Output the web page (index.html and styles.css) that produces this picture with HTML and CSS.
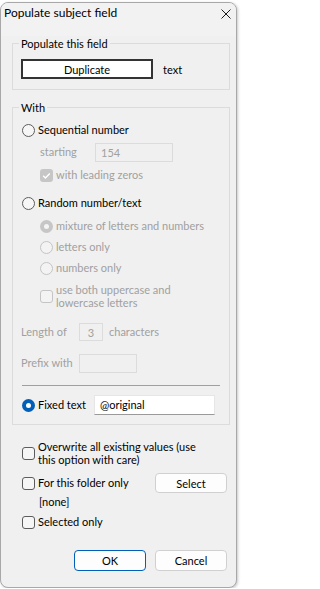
FILE: index.html
```html
<!DOCTYPE html>
<html>
<head>
<meta charset="utf-8">
<link rel="stylesheet" href="styles.css">
</head>
<body>
<div class="window">
  <div class="titlebar">
    <span class="title">Populate subject field</span>
    <svg class="close" width="10" height="10" viewBox="0 0 10 10"><path d="M0.5 0.5 L9.5 9.5 M9.5 0.5 L0.5 9.5" stroke="#1b1b1b" stroke-width="1" fill="none"/></svg>
  </div>
  <div class="content">
    <fieldset class="group g1">
      <legend>Populate this field</legend>
      <div class="dup-row">
        <button class="btn-dup">Duplicate</button>
        <span class="suffix">text</span>
      </div>
    </fieldset>

    <fieldset class="group g2">
      <legend>With</legend>
      <div class="row r-seq"><span class="radio"></span><span class="lbl">Sequential number</span></div>
      <div class="row r-start indent"><span class="lbl dis w-start">starting</span><span class="edit dis e-start">154</span></div>
      <div class="row r-zeros indent"><span class="check checked-dis"><svg width="13" height="13" viewBox="0 0 13 13"><path d="M3.2 6.8 L5.4 9 L9.8 4.4" stroke="#fff" stroke-width="1.4" fill="none"/></svg></span><span class="lbl dis">with leading zeros</span></div>
      <div class="row r-rand"><span class="radio"></span><span class="lbl">Random number/text</span></div>
      <div class="row r-mix indent"><span class="radio checked-dis"></span><span class="lbl dis">mixture of letters and numbers</span></div>
      <div class="row r-tight indent"><span class="radio dis"></span><span class="lbl dis">letters only</span></div>
      <div class="row r-tight indent"><span class="radio dis"></span><span class="lbl dis">numbers only</span></div>
      <div class="row tall r-case indent"><span class="check dis"></span><span class="lbl dis two">use both uppercase and<br>lowercase letters</span></div>
      <div class="row r-len"><span class="lbl dis w-len">Length of</span><span class="edit dis e-len">3</span><span class="lbl dis after">characters</span></div>
      <div class="row r-prefix"><span class="lbl dis w-len">Prefix with</span><span class="edit dis e-prefix"></span></div>
      <div class="sep"></div>
      <div class="row r-fixed"><span class="radio checked"></span><span class="lbl w-fixed">Fixed text</span><span class="edit e-fixed">@original</span></div>
    </fieldset>

    <div class="options">
      <div class="row tall r-over"><span class="check"></span><span class="lbl two">Overwrite all existing values (use<br>this option with care)</span></div>
      <div class="row r-folder"><span class="check"></span><span class="lbl">For this folder only</span><button class="btn push-right">Select</button></div>
      <div class="none-line">[none]</div>
      <div class="row r-sel"><span class="check"></span><span class="lbl">Selected only</span></div>
      <div class="buttons">
        <button class="btn default">OK</button>
        <button class="btn">Cancel</button>
      </div>
    </div>
  </div>
</div>
</body>
</html>
```

FILE: styles.css
```css
html, body {
  margin: 0;
  padding: 0;
}
body {
  background: #ffffff;
  font-family: Lato, "Noto Sans", "Liberation Sans", sans-serif;
  font-size: 11px;
  color: #000;
}
.window {
  margin-top: 2px;
  width: 237px;
  height: 586px;
  box-sizing: border-box;
  border: 1px solid #a8a8a8;
  border-radius: 8px;
  background: #f0f0f0;
  overflow: hidden;
  box-shadow: 1px 1px 3px rgba(0, 0, 0, 0.22);
}
.titlebar {
  height: 33px;
  box-sizing: border-box;
  display: flex;
  align-items: flex-start;
  padding: 2px 5px 0 3px;
  background: #f2f2f2;
}
.title {
  line-height: 16px;
  font-size: 12px;
}
.close {
  margin-left: auto;
  margin-top: 4px;
  display: block;
}
.content {
  padding-left: 11px;
}
.group {
  margin: 0;
  width: 218px;
  box-sizing: border-box;
  min-width: 0;
  border: 1px solid #dcdcdc;
}
.group legend {
  padding: 0 2px;
  line-height: 15px;
}
.g1 {
  padding: 8px 8px 10px 8px;
}
.g1 legend {
  margin-left: -2px;
}
.g2 {
  margin-top: 10px;
  padding: 5px 9px 9px 9px;
}
.g2 legend {
  margin-left: -3px;
}
.dup-row {
  display: flex;
  align-items: center;
  height: 20px;
}
.btn-dup {
  width: 132px;
  height: 20px;
  box-sizing: border-box;
  border: 2px solid #333;
  background: #fff;
  font: inherit;
  padding: 0;
  border-radius: 0;
}
.suffix {
  margin-left: 10px;
}
.row {
  display: flex;
  align-items: center;
  height: 20px;
}
.row.tall {
  height: 26px;
}
.indent {
  padding-left: 18px;
}
.lbl {
  white-space: nowrap;
  line-height: 16px;
}
.lbl.two {
  line-height: 13px;
}
.dis {
  color: #a0a0a0;
}
.radio,
.check {
  flex: none;
  width: 13px;
  height: 13px;
  box-sizing: border-box;
  margin-right: 3px;
  position: relative;
}
.radio {
  border-radius: 50%;
  border: 1px solid #5c5c5c;
  background: #f6f6f6;
}
.radio.dis {
  border-color: #c4c4c4;
  background: #f3f3f3;
}
.radio.checked,
.radio.checked-dis {
  border: none;
}
.radio.checked {
  background: #005fb8;
}
.radio.checked-dis {
  background: #c6c6c6;
}
.radio.checked::after,
.radio.checked-dis::after {
  content: "";
  position: absolute;
  left: 4px;
  top: 4px;
  width: 5px;
  height: 5px;
  border-radius: 50%;
  background: #fff;
}
.radio.checked-dis::after {
  background: #f4f4f4;
}
.check {
  border-radius: 3px;
  border: 1px solid #5c5c5c;
  background: #f6f6f6;
}
.check.dis {
  border-color: #c4c4c4;
  background: #f3f3f3;
}
.check.checked-dis {
  border: none;
  background: #c6c6c6;
}
.check svg {
  display: block;
}
.edit {
  box-sizing: border-box;
  height: 19px;
  line-height: 17px;
  border: 1px solid #dcdcdc;
  padding: 0 5px;
}
.edit.dis {
  background: #f0f0f0;
}
.w-start {
  width: 55px;
}
.e-start {
  width: 78px;
}
.r-start { margin-top: 2px; }
.r-zeros { margin-top: 3px; }
.r-rand { margin-top: 8px; }
.r-mix { margin-top: 3px; }
.r-tight { margin-top: 1px; }
.r-case { margin-top: 5px; }
.r-len { margin-top: 13px; margin-left: -1px; }
.r-prefix { margin-top: 11px; margin-left: -1px; }
.w-len {
  width: 58px;
}
.e-len {
  width: 24px;
  height: 18px;
  text-align: center;
  padding: 0;
}
.after {
  margin-left: 6px;
}
.e-prefix {
  width: 58px;
}
.sep {
  margin-top: 12px;
  height: 0;
  border-top: 1px solid #a0a0a0;
}
.r-fixed {
  margin-top: 9px;
}
.w-fixed {
  width: 56px;
}
.e-fixed {
  width: 121px;
  height: 20px;
  line-height: 18px;
  background: #fff;
  border-color: #e6e6e6;
  border-bottom-color: #9a9a9a;
}
.options {
  margin-left: 10px;
  width: 205px;
}
.r-over { margin-top: 15px; }
.r-folder { margin-top: 7px; }
.r-sel { margin-top: 2px; }
.none-line {
  margin-top: 1px;
  padding-left: 17px;
  line-height: 16px;
}
.btn {
  width: 72px;
  height: 20px;
  box-sizing: border-box;
  border: 1px solid #d0d0d0;
  border-radius: 4px;
  background: #fdfdfd;
  font: inherit;
  color: #000;
  padding: 0;
}
.push-right {
  margin-left: auto;
}
.buttons {
  margin-top: 18px;
  display: flex;
  justify-content: flex-end;
  gap: 9px;
}
.buttons .btn {
  height: 21px;
}
.btn.default {
  border-color: #005fb8;
}
```
